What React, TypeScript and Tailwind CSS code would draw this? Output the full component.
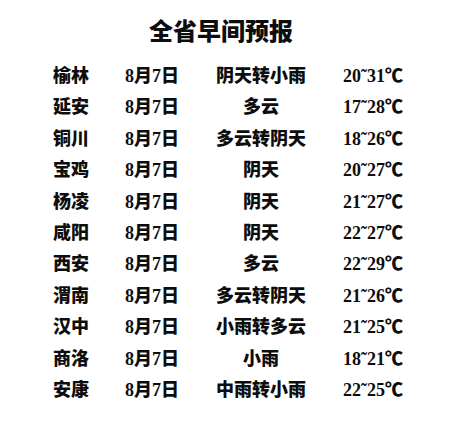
import React from "react";

const rows: [string, string, string][] = [
  ["榆林", "阴天转小雨", "20˜31℃"],
  ["延安", "多云", "17˜28℃"],
  ["铜川", "多云转阴天", "18˜26℃"],
  ["宝鸡", "阴天", "20˜27℃"],
  ["杨凌", "阴天", "21˜27℃"],
  ["咸阳", "阴天", "22˜27℃"],
  ["西安", "多云", "22˜29℃"],
  ["渭南", "多云转阴天", "21˜26℃"],
  ["汉中", "小雨转多云", "21˜25℃"],
  ["商洛", "小雨", "18˜21℃"],
  ["安康", "中雨转小雨", "22˜25℃"],
];

export default function App() {
  return (
    <div
      className="w-[450px] h-[425px] bg-white text-[#0d0d0d] font-black overflow-hidden"
      style={{ fontFamily: '"Liberation Serif", "Noto Sans CJK SC", serif' }}
    >
      <div className="pt-[16px] h-[61px] pr-[8px] text-center text-[24px] leading-[32px]">
        全省早间预报
      </div>
      <div className="grid grid-cols-[72px_74px_124px_auto] pl-[53px] auto-rows-[31.4px] text-[18px] leading-[31.4px]">
        {rows.map(([city, weather, temp]) => (
          <React.Fragment key={city}>
            <div>{city}</div>
            <div>8月7日</div>
            <div className="text-center">{weather}</div>
            <div className="pl-[20px]">{temp}</div>
          </React.Fragment>
        ))}
      </div>
    </div>
  );
}
